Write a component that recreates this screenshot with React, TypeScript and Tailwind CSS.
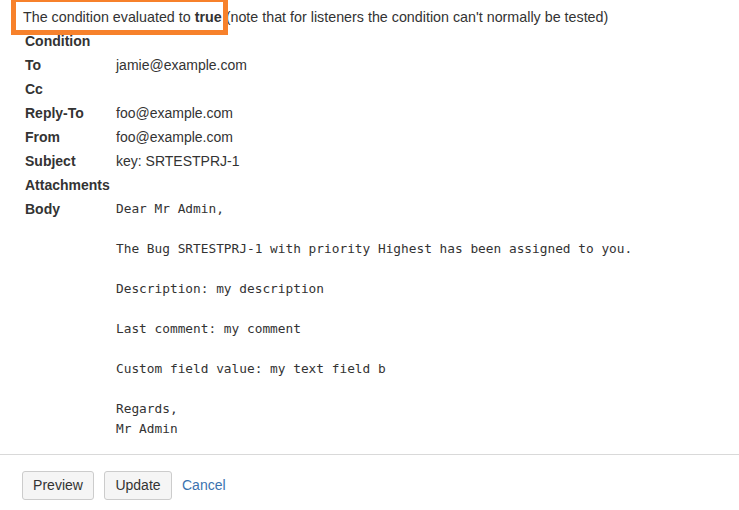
import React from "react";

const rows: [string, string][] = [
  ["Condition", ""],
  ["To", "jamie@example.com"],
  ["Cc", ""],
  ["Reply-To", "foo@example.com"],
  ["From", "foo@example.com"],
  ["Subject", "key: SRTESTPRJ-1"],
  ["Attachments", ""],
];

const body = `Dear Mr Admin,

The Bug SRTESTPRJ-1 with priority Highest has been assigned to you.

Description: my description

Last comment: my comment

Custom field value: my text field b

Regards,
Mr Admin`;

export default function App() {
  return (
    <div
      className="relative w-[739px] h-[510px] bg-white text-[#333] text-[14px] overflow-hidden"
      style={{ fontFamily: '"Liberation Sans", Arial, sans-serif' }}
    >
      <div className="pl-[23px] pt-[6px]">
        <div className="leading-[23px] h-[23px] whitespace-nowrap text-[14.3px]">
          The condition evaluated to <b>true</b> (note that for listeners the condition can't normally be tested)
        </div>
        <div className="pl-[2px]">
          {rows.map(([k, v]) => (
            <div key={k} className="flex h-[24px] leading-[24px]">
              <div className="w-[91px] font-bold">{k}</div>
              <div>{v}</div>
            </div>
          ))}
          <div className="flex">
            <div className="w-[91px] font-bold leading-[24px]">Body</div>
            <pre
              className="mt-[2px] text-[12.8px] leading-[20px] text-[#333]"
              style={{ fontFamily: '"DejaVu Sans Mono", "Liberation Mono", monospace' }}
            >
              {body}
            </pre>
          </div>
        </div>
      </div>
      <div className="mt-[15px] border-t border-[#d9d9d9]" />
      <div className="flex items-center gap-[10px] pl-[22px] pt-[16px]">
        <button className="h-[29px] w-[72px] rounded-[3px] border border-[#ccc] bg-[#f5f5f5] text-[14px] text-[#333]">
          Preview
        </button>
        <button className="h-[29px] w-[68px] rounded-[3px] border border-[#ccc] bg-[#f5f5f5] text-[14px] text-[#333]">
          Update
        </button>
        <span className="text-[#3b73af]">Cancel</span>
      </div>
      <div className="absolute left-[11px] top-[-3px] w-[217px] h-[38px] border-[5px] border-[#f7812b] pointer-events-none" />
    </div>
  );
}
